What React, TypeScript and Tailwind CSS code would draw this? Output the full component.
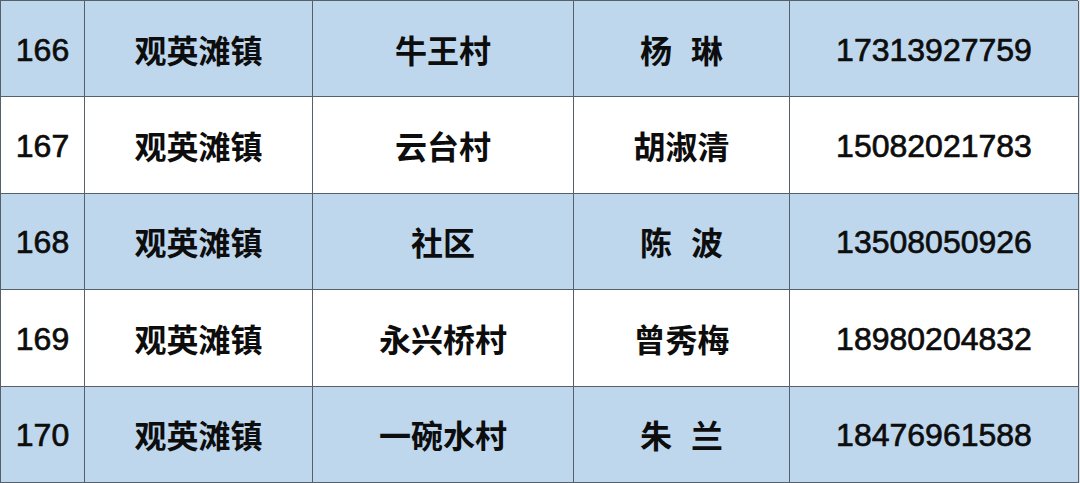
import React from "react";

const rows = [
  { n: "166", town: "观英滩镇", village: "牛王村", name: ["杨", "琳"], phone: "17313927759" },
  { n: "167", town: "观英滩镇", village: "云台村", name: ["胡淑清"], phone: "15082021783" },
  { n: "168", town: "观英滩镇", village: "社区", name: ["陈", "波"], phone: "13508050926" },
  { n: "169", town: "观英滩镇", village: "永兴桥村", name: ["曾秀梅"], phone: "18980204832" },
  { n: "170", town: "观英滩镇", village: "一碗水村", name: ["朱", "兰"], phone: "18476961588" },
];

const cjk = "font-['Noto_Sans_CJK_SC','Noto_Sans',sans-serif] font-bold text-[32px] text-[#0d0d0d]";
const num = "font-['Liberation_Sans',Arial,sans-serif] text-[32px] text-[#0d0d0d] [-webkit-text-stroke:0.7px_#0d0d0d] pt-[2px]";

export default function App() {
  return (
    <div className="w-[1080px] h-[483px] bg-[#dfe3e8] overflow-hidden">
      <div className="w-[1078px] h-[483px] grid grid-cols-[84px_228px_261px_216px_289px] grid-rows-5 border-t border-l border-[#56606b]">
        {rows.map((r, i) => {
          const bg = i % 2 === 0 ? "bg-[#bed7ed]" : "bg-white";
          const cell = `${bg} border-r border-b border-[#56606b] flex items-center justify-center`;
          return (
            <React.Fragment key={r.n}>
              <div className={`${cell} ${num}`}>{r.n}</div>
              <div className={`${cell} ${cjk}`}>{r.town}</div>
              <div className={`${cell} ${cjk}`}>{r.village}</div>
              <div className={`${cell} ${cjk} gap-[19px]`}>
                {r.name.map((c) => (
                  <span key={c}>{c}</span>
                ))}
              </div>
              <div className={`${cell} ${num}`}>{r.phone}</div>
            </React.Fragment>
          );
        })}
      </div>
    </div>
  );
}
